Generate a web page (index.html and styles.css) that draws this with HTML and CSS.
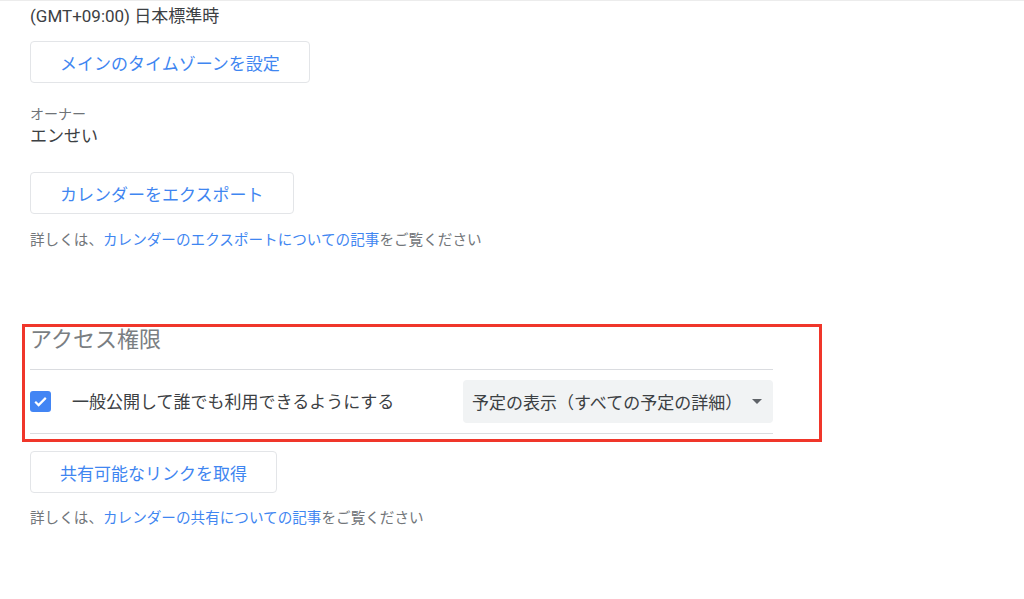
FILE: index.html
```html
<!DOCTYPE html>
<html lang="ja">
<head>
<meta charset="utf-8">
<title>カレンダーの設定</title>
<link rel="stylesheet" href="styles.css">
</head>
<body>
<div class="page">
  <div class="tz">(GMT+09:00) 日本標準時</div>
  <div class="btn btn-tz">メインのタイムゾーンを設定</div>

  <div class="label">オーナー</div>
  <div class="value">エンせい</div>

  <div class="btn btn-export">カレンダーをエクスポート</div>
  <p class="help help-export">詳しくは、<a class="link">カレンダーのエクスポートについての記事</a>をご覧ください</p>

  <section class="annot">
    <h2 class="section-title">アクセス権限</h2>
    <div class="perm-row">
      <div class="check-wrap">
        <span class="checkbox">
          <svg viewBox="0 0 21 21" width="21" height="21"><path d="M5.2 10.8l3.4 3.3 7.2-7.2" fill="none" stroke="#fff" stroke-width="2.2"/></svg>
        </span>
        <span class="check-label">一般公開して誰でも利用できるようにする</span>
      </div>
      <div class="select">
        <span>予定の表示（すべての予定の詳細）</span>
        <span class="caret"></span>
      </div>
    </div>
  </section>

  <div class="btn btn-share">共有可能なリンクを取得</div>
  <p class="help help-share">詳しくは、<a class="link">カレンダーの共有についての記事</a>をご覧ください</p>
</div>
</body>
</html>
```
FILE: styles.css
```css
* { box-sizing: border-box; }
html, body { margin: 0; padding: 0; background: #fff; }
body {
  font-family: Roboto, "Noto Sans CJK JP", sans-serif;
  color: #3c4043;
  border-top: 1px solid #ececec;
}
.page {
  padding-left: 30px;
  display: flex;
  flex-direction: column;
  align-items: flex-start;
}
.tz {
  margin-top: 3px;
  font-size: 17px;
  line-height: 24px;
}
.btn {
  display: inline-flex;
  align-items: center;
  justify-content: center;
  height: 42px;
  padding: 0 29px;
  border: 1px solid #e3e5e8;
  border-radius: 4px;
  color: #3f86f1;
  font-size: 17px;
  background: #fff;
  white-space: nowrap;
}
.btn-tz { margin-top: 13px; }
.label {
  margin-top: 21px;
  font-size: 14px;
  line-height: 20px;
  color: #6f7377;
}
.value {
  font-size: 17px;
  line-height: 24px;
}
.btn-export { margin-top: 24px; }
.help {
  margin: 16px 0 0;
  font-size: 14.6px;
  line-height: 20px;
  color: #72767a;
}
.link { color: #3f86f1; text-decoration: none; }
.annot {
  margin-top: 74px;
  margin-left: -8px;
  width: 800px;
  border: 3px solid #f0362a;
  padding: 0 0 5px 5px;
}
.section-title {
  margin: 0;
  font-size: 22px;
  font-weight: 400;
  line-height: 26px;
  color: #7a7e82;
}
.perm-row {
  margin-top: 16px;
  width: 743px;
  border-top: 1px solid #dadce0;
  border-bottom: 1px solid #dadce0;
  padding: 10px 0;
  display: flex;
  align-items: center;
  justify-content: space-between;
}
.check-wrap {
  display: flex;
  align-items: center;
  gap: 21px;
}
.checkbox {
  width: 21px;
  height: 21px;
  border-radius: 3px;
  background: #4285f4;
  display: flex;
}
.check-label {
  font-size: 17px;
  line-height: 24px;
}
.select {
  width: 310px;
  height: 43px;
  background: #f1f3f4;
  border-radius: 4px;
  padding: 0 11px 0 9px;
  display: flex;
  align-items: center;
  justify-content: space-between;
  font-size: 17px;
}
.caret {
  width: 0;
  height: 0;
  border-left: 5px solid transparent;
  border-right: 5px solid transparent;
  border-top: 5px solid #5f6368;
}
.btn-share { margin-top: 9px; }
.help-share { margin-top: 15px; }
```
